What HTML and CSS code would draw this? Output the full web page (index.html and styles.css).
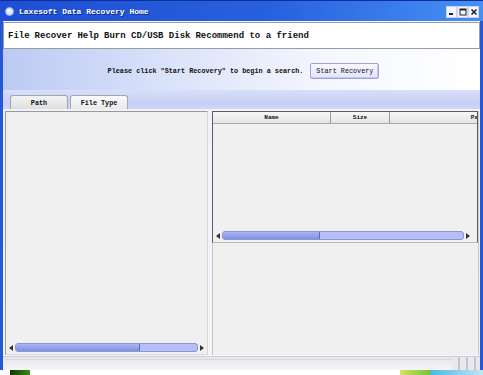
FILE: index.html
```html
<!DOCTYPE html>
<html lang="en">
<head>
  <meta charset="UTF-8" />
  <title>Laxesoft Data Recovery Home</title>
  <link rel="stylesheet" href="styles.css">
</head>
<body>
  <div class="window">
    <div class="titlebar">
      <svg class="app-icon" width="9" height="9" viewBox="0 0 9 9">
        <circle cx="4.5" cy="4.5" r="4" fill="#dfe8ff" stroke="#8aa4e8" stroke-width="1"/>
        <circle cx="3.5" cy="3.5" r="1.5" fill="#ffffff"/>
      </svg>
      <span class="title">Laxesoft Data Recovery Home</span>
      <div class="caption-buttons">
        <span class="cap-btn"><svg width="8" height="8" viewBox="0 0 8 8"><rect x="1" y="5" width="4" height="2" fill="#222"/></svg></span>
        <span class="cap-btn"><svg width="8" height="8" viewBox="0 0 8 8"><rect x="1" y="1" width="6" height="6" fill="none" stroke="#222" stroke-width="1"/><rect x="1" y="1" width="6" height="1.5" fill="#222"/></svg></span>
        <span class="cap-btn"><svg width="8" height="8" viewBox="0 0 8 8"><path d="M1.5 1.5 L6.5 6.5 M6.5 1.5 L1.5 6.5" stroke="#222" stroke-width="1.6"/></svg></span>
      </div>
    </div>

    <div class="frame">
      <div class="menubar">
        <span>File</span>
        <span>Recover</span>
        <span>Help</span>
        <span>Burn CD/USB Disk</span>
        <span>Recommend to a friend</span>
      </div>

      <div class="banner">
        <span class="hint">Please click "Start Recovery" to begin a search.</span>
        <button class="start-btn">Start Recovery</button>
      </div>

      <div class="tabstrip">
        <div class="tab">Path</div>
        <div class="tab active">File Type</div>
      </div>

      <div class="panes">
        <div class="left-pane">
          <div class="tree"></div>
          <div class="hscroll">
            <span class="arrow left"></span>
            <div class="track"><div class="thumb" style="width: 68%"></div></div>
            <span class="arrow right"></span>
          </div>
        </div>
        <div class="splitter"></div>
        <div class="right-col">
          <div class="list-pane">
            <div class="list-header">
              <div class="col col-name">Name</div>
              <div class="col col-size">Size</div>
              <div class="col col-path">Path</div>
            </div>
            <div class="list-body"></div>
            <div class="hscroll wide">
              <span class="arrow left"></span>
              <div class="track"><div class="thumb" style="width: 40%"></div></div>
              <span class="arrow right"></span>
            </div>
          </div>
          <div class="preview-pane"></div>
        </div>
      </div>

      <div class="statusbar">
        <div class="status-cell"></div>
        <div class="grip"></div>
      </div>
    </div>
  </div>

  <div class="desktop">
    <div class="deco green"></div>
    <div class="deco lime"></div>
    <div class="deco sky"></div>
  </div>
</body>
</html>
```

FILE: styles.css
```css
body {
  margin: 0;
  width: 483px;
  height: 375px;
  overflow: hidden;
  background: #ffffff;
  font-family: "Liberation Mono", "DejaVu Sans Mono", monospace;
  color: #111;
}

.window {
  height: 370px;
  display: flex;
  flex-direction: column;
  background: #2458d8;
}

/* title bar */
.titlebar {
  height: 21px;
  flex: none;
  display: flex;
  align-items: center;
  padding: 0 4px 0 5px;
  background: linear-gradient(to right, #1f4ed2, #2760de 55%, #4690f4);
  border-top: 1px solid #0b2f9c;
  box-sizing: border-box;
}

.app-icon {
  margin-right: 5px;
}

.title {
  color: #ffffff;
  font-weight: bold;
  font-size: 8px;
  text-shadow: 1px 1px 0 #0c2a80;
  flex: 1;
}

.caption-buttons {
  display: flex;
  margin-top: 2px;
}

.cap-btn {
  width: 9px;
  height: 10px;
  background: #f4f6ff;
  border: 1px solid #c9d4f2;
  display: flex;
  align-items: center;
  justify-content: center;
}

/* frame */
.frame {
  flex: 1;
  display: flex;
  flex-direction: column;
  margin: 0 3px;
  background: #f5f6fb;
}

.menubar {
  height: 25px;
  flex: none;
  margin-top: 1px;
  display: flex;
  align-items: center;
  gap: 5px;
  padding-left: 4px;
  background: #ffffff;
  border: 1px solid #9c9c9c;
  font-weight: bold;
  font-size: 9px;
}

.banner {
  height: 38px;
  flex: none;
  display: flex;
  align-items: center;
  justify-content: center;
  gap: 7px;
  padding-left: 4px;
  padding-top: 3px;
  background: linear-gradient(to right, #bccaf3 0%, #dbe3fa 35%, #f6f8fe 70%, #ffffff 100%);
}

.hint {
  font-size: 6.8px;
  font-weight: bold;
}

.start-btn {
  width: 69px;
  height: 16px;
  padding: 0;
  font-family: inherit;
  font-size: 6.8px;
  color: #111;
  background: linear-gradient(to bottom, #f8f8ff, #e2e4fa);
  border: 1px solid #9aa4d8;
  border-radius: 2px;
  box-shadow: inset -1px -1px 0 #c4c9f0;
}

.tabstrip {
  height: 19px;
  flex: none;
  display: flex;
  align-items: flex-end;
  gap: 2px;
  padding-left: 7px;
  box-sizing: border-box;
  background: linear-gradient(to bottom, #d7dff9, #c6cff6 70%, #d0d7f7);
}

.tab {
  width: 56px;
  height: 13px;
  display: flex;
  align-items: center;
  justify-content: center;
  font-size: 6.8px;
  font-weight: bold;
  background: linear-gradient(to bottom, #f3f3f3, #dedede);
  border: 1px solid #a6a6a6;
  border-bottom: none;
  border-radius: 3px 3px 0 0;
}

.tab.active {
  background: linear-gradient(to bottom, #fbfbfb, #e9e9e9);
}

/* panes */
.panes {
  flex: 1;
  display: flex;
  padding: 2px 0 1px 2px;
  background: linear-gradient(to bottom, #f0f2fb, #f4f4f8);
}

.left-pane {
  flex: none;
  width: 201px;
  display: flex;
  flex-direction: column;
  background: #f0f0f0;
  border: 1px solid #9a9a9a;
  border-right-color: #d8d8d8;
  border-bottom-color: #d8d8d8;
}

.tree {
  flex: 1;
}

.splitter {
  flex: none;
  width: 4px;
}

.right-col {
  flex: 1;
  min-width: 0;
  display: flex;
  flex-direction: column;
  margin-right: 1px;
  border-right: 1px solid #c8c8d0;
}

.list-pane {
  height: 132px;
  flex: none;
  display: flex;
  flex-direction: column;
  background: #f0f0f0;
  border: 1px solid #5e5e5e;
  border-bottom: 1px solid #b8b8b8;
  box-sizing: border-box;
}

.list-header {
  height: 11px;
  display: flex;
  overflow: hidden;
  background: linear-gradient(to bottom, #f6f6f6, #e6e6e6);
  border-bottom: 1px solid #a9a9a9;
}

.col {
  flex: none;
  display: flex;
  align-items: center;
  justify-content: center;
  font-size: 6px;
  font-weight: bold;
  border-right: 1px solid #9b9b9b;
}

.col-name { width: 117px; }
.col-size { width: 58px; }
.col-path { width: 176px; }

.list-body {
  flex: 1;
}

.preview-pane {
  flex: 1;
  background: #f0f0f0;
  border-left: 1px solid #c6c6c6;
}

/* scrollbars */
.hscroll {
  height: 9px;
  display: flex;
  align-items: center;
  margin: 0 2px 2px 2px;
}

.hscroll.wide {
  margin: 0 6px 2px 2px;
}

.arrow {
  width: 6px;
  height: 9px;
  position: relative;
}

.arrow::after {
  content: "";
  position: absolute;
  top: 2px;
  border-top: 3px solid transparent;
  border-bottom: 3px solid transparent;
}

.arrow.left::after {
  left: 1px;
  border-right: 4px solid #333;
}

.arrow.right::after {
  left: 1px;
  border-left: 4px solid #333;
}

.track {
  flex: 1;
  height: 7px;
  margin: 0 1px;
  background: #b7bdf5;
  border: 1px solid #8d95d6;
  border-radius: 3px;
  overflow: hidden;
}

.thumb {
  height: 100%;
  background: linear-gradient(to bottom, #a8b5f0, #7f92e0);
  border-right: 1px solid #5d6cc4;
}

/* status bar */
.statusbar {
  height: 14px;
  flex: none;
  display: flex;
  background: linear-gradient(to bottom, #e4e4ea, #f6f6f8);
  border-top: 1px solid #cfcfd6;
  box-sizing: border-box;
}

.status-cell {
  flex: 1;
  margin: 2px 0 2px 2px;
  border-top: 1px solid #d8d8de;
}

.grip {
  width: 28px;
  background: repeating-linear-gradient(to right, #e8e8ee 0 6px, #c4c4cc 6px 8px);
}

/* desktop strip */
.desktop {
  height: 5px;
  display: flex;
  background: #ffffff;
}

.deco.green {
  width: 20px;
  margin-left: 10px;
  background: linear-gradient(to right, #0e3a06, #3e8a16);
}

.deco.lime {
  width: 30px;
  margin-left: 370px;
  background: linear-gradient(to right, #cfe46a, #7cc23a);
}

.deco.sky {
  flex: 1;
  background: linear-gradient(to right, #4ab8e6, #bfe6f6);
}
```
